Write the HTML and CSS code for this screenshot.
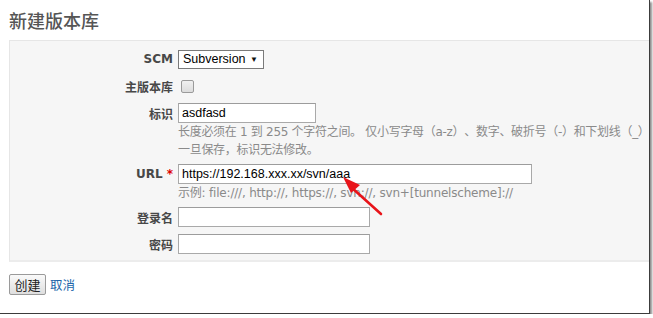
FILE: index.html
```html
<!DOCTYPE html>
<html lang="zh-CN">
<head>
<meta charset="utf-8">
<title>新建版本库</title>
<link rel="stylesheet" href="styles.css">
</head>
<body>
<div class="frame">
  <h2 class="title">新建版本库</h2>
  <div class="box">
    <div class="row">
      <label class="lbl">SCM</label>
      <div class="field">
        <span class="select"><span class="select-text">Subversion</span><span class="caret">▼</span></span>
      </div>
    </div>
    <div class="row">
      <label class="lbl">主版本库</label>
      <div class="field"><span class="checkbox"></span></div>
    </div>
    <div class="row">
      <label class="lbl">标识</label>
      <div class="field"><span class="input w-ident">asdfasd</span></div>
    </div>
    <div class="hint hint-ident">
      <div class="hint-line">长度必须在 1 到 255 个字符之间。 仅小写字母（a-z）、数字、破折号（-）和下划线（_）可以使用。</div>
      <div class="hint-line">一旦保存，标识无法修改。</div>
    </div>
    <div class="row row-url">
      <label class="lbl">URL <span class="req">*</span></label>
      <div class="field"><span class="input w-url">https://192.168.xxx.xx/svn/aaa</span></div>
    </div>
    <div class="hint hint-url">
      <div class="hint-line">示例: file:///, http://, https://, svn://, svn+[tunnelscheme]://</div>
    </div>
    <div class="row row-login">
      <label class="lbl">登录名</label>
      <div class="field"><span class="input w-short"></span></div>
    </div>
    <div class="row">
      <label class="lbl">密码</label>
      <div class="field"><span class="input w-short"></span></div>
    </div>
  </div>
  <div class="actions">
    <button class="btn">创建</button>
    <a class="link" href="#">取消</a>
  </div>
  <svg class="arrow" width="60" height="50" viewBox="0 0 60 50">
    <line x1="16" y1="17" x2="46" y2="44" stroke="#e8141a" stroke-width="2.6" stroke-linecap="round"/>
    <polygon points="8,7 25,15 16,23" fill="#e8141a"/>
  </svg>
</div>
</body>
</html>
```
FILE: styles.css
```css
html, body {
  margin: 0;
  padding: 0;
  background: #fff;
}
.frame {
  position: relative;
  width: 640px;
  height: 313px;
  padding: 0 0 0 9px;
  overflow: hidden;
  border-right: 1px solid #3c3c3c;
  border-bottom: 1px solid #3c3c3c;
  box-shadow: 2px 2px 2px rgba(0,0,0,0.45);
  font-family: "Liberation Sans", "Noto Sans CJK SC", sans-serif;
  font-size: 12px;
  color: #333;
}
.title {
  margin: 0;
  padding: 9px 0 9px;
  height: 22px;
  line-height: 22px;
  font-family: "Noto Sans CJK SC", sans-serif;
  font-size: 18px;
  font-weight: 500;
  color: #555;
}
.box {
  width: 900px;
  background: #f6f6f6;
  border: 1px solid #e6e6e6;
  border-bottom: 2px solid #ececec;
  padding: 8px 0 6px;
}
.row {
  display: flex;
  align-items: center;
  height: 20px;
  margin-bottom: 7px;
}
.row:last-child { margin-bottom: 0; }
.lbl {
  width: 163px;
  padding-right: 5px;
  text-align: right;
  font-family: "DejaVu Sans", "Noto Sans CJK SC", sans-serif;
  font-weight: bold;
  font-size: 12px;
  color: #484848;
  box-sizing: content-box;
}
.req { color: #d00; }
.field { display: flex; align-items: center; }
.select {
  display: inline-flex;
  align-items: center;
  justify-content: space-between;
  box-sizing: border-box;
  width: 86px;
  height: 19px;
  padding: 0 5px 0 4px;
  background: #fff;
  border: 1px solid #7a7a7a;
  font-family: "Liberation Sans", sans-serif;
  font-size: 12.5px;
  color: #000;
}
.caret { font-size: 8px; color: #111; }
.checkbox {
  display: inline-block;
  box-sizing: border-box;
  width: 13px;
  height: 13px;
  margin-left: 3px;
  border: 1px solid #9a9a9a;
  border-radius: 2px;
  background: linear-gradient(#f0f0f0, #dcdcdc);
}
.input {
  display: inline-block;
  box-sizing: border-box;
  height: 20px;
  line-height: 18px;
  padding: 0 3px;
  background: #fff;
  border: 1px solid #a9a9a9;
  border-top-color: #9c9c9c;
  font-family: "Liberation Sans", sans-serif;
  font-size: 12.5px;
  color: #000;
  white-space: nowrap;
}
.w-ident { width: 138px; }
.w-url { width: 354px; }
.w-short { width: 192px; }
.hint {
  margin-left: 168px;
  font-family: "DejaVu Sans", "Noto Sans CJK SC", sans-serif;
  font-size: 12px;
  letter-spacing: -0.3px;
  color: #8a8a8a;
  white-space: nowrap;
  text-spacing-trim: space-all;
  font-feature-settings: "fwid" 1;
}
.hint-line {
  height: 18px;
  line-height: 18px;
  overflow: visible;
}
.hint-ident { margin-top: -7px; margin-bottom: 5px; }
.hint-url { margin-top: -7px; margin-bottom: 5px; letter-spacing: -0.2px; }
.actions {
  display: flex;
  align-items: center;
  gap: 4px;
  margin-top: 12px;
}
.btn {
  height: 21px;
  width: 37px;
  padding: 0;
  border: 1px solid #9a9a9a;
  border-radius: 2px;
  background: linear-gradient(#fafafa, #dedede);
  font-family: "Noto Sans CJK SC", sans-serif;
  font-size: 13px;
  color: #222;
}
.link {
  font-family: "Noto Sans CJK SC", sans-serif;
  font-size: 12.5px;
  color: #2266aa;
  text-decoration: none;
}
.arrow {
  position: absolute;
  left: 335px;
  top: 170px;
}
```
